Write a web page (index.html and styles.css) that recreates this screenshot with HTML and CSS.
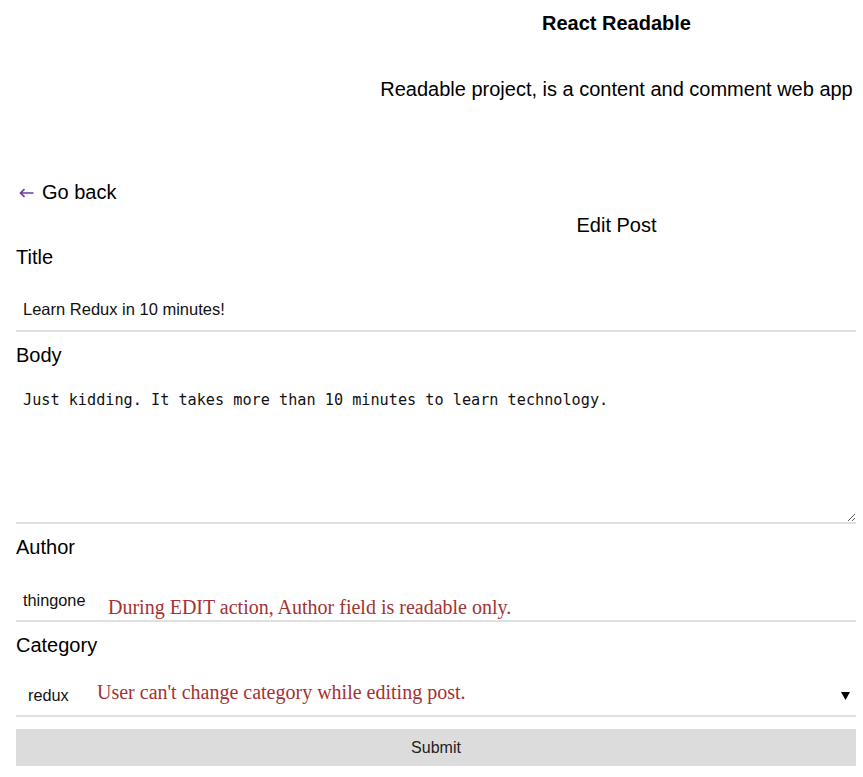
FILE: index.html
```html
<!DOCTYPE html>
<html>
<head>
<meta charset="utf-8">
<title>React Readable</title>
<link rel="stylesheet" href="styles.css">
</head>
<body>
<header class="masthead">
  <div class="masthead-spacer"></div>
  <div class="masthead-text">
    <h1 class="app-title">React Readable</h1>
    <p class="app-desc">Readable project, is a content and comment web app</p>
  </div>
</header>
<main class="page">
  <a class="back-link" href="#"><svg class="back-arrow" width="15" height="10" viewBox="0 0 15 10"><path d="M14.5 5 H1.5 M5.5 1.2 L1.5 5 L5.5 8.8" fill="none" stroke="#6a3c9e" stroke-width="1.6"/></svg><span class="back-text">Go back</span></a>
  <div class="edit-heading-row">
    <div class="heading-spacer"></div>
    <h2 class="edit-heading">Edit Post</h2>
  </div>
  <form class="post-form">
    <div class="field">
      <label class="field-label">Title</label>
      <input class="text-input" type="text" value="Learn Redux in 10 minutes!">
    </div>
    <div class="field">
      <label class="field-label">Body</label>
      <textarea class="text-area">Just kidding. It takes more than 10 minutes to learn technology.</textarea>
    </div>
    <div class="field">
      <label class="field-label">Author</label>
      <div class="readonly-row">
        <input class="text-input author-input" type="text" value="thingone" readonly>
        <span class="note note-author">During EDIT action, Author field is readable only.</span>
      </div>
    </div>
    <div class="field">
      <label class="field-label">Category</label>
      <div class="select-row">
        <span class="select-value">redux</span>
        <span class="note note-category">User can't change category while editing post.</span>
        <svg class="select-caret" width="9" height="8" viewBox="0 0 9 8"><path d="M0 0 H9 L4.5 8 Z" fill="#000"/></svg>
      </div>
    </div>
    <button class="submit-btn" type="button">Submit</button>
  </form>
</main>
</body>
</html>
```
FILE: styles.css
```css
html, body {
  margin: 0;
  padding: 0;
  background: #fff;
}
body {
  font-family: "Liberation Sans", Arial, sans-serif;
  color: #000;
}
.masthead {
  display: grid;
  grid-template-columns: 370px 1fr;
  padding-top: 12px;
}
.masthead-spacer {
  width: 370px;
}
.masthead-text {
  text-align: center;
}
.app-title {
  margin: 0;
  font-size: 20px;
  line-height: 22px;
  font-weight: bold;
}
.app-desc {
  margin: 43px 0 0;
  font-size: 20px;
  line-height: 24px;
}
.page {
  padding: 0 7px 0 16px;
}
.back-link {
  display: flex;
  align-items: center;
  margin-top: 79px;
  height: 24px;
  font-size: 20px;
  line-height: 24px;
  color: #000;
  text-decoration: none;
}
.back-arrow {
  margin-left: 3px;
  margin-top: 1px;
}
.back-text {
  margin-left: 8px;
}
.edit-heading-row {
  display: grid;
  grid-template-columns: 361px 1fr;
  margin-top: 9px;
}
.edit-heading {
  margin: 0;
  font-size: 20px;
  line-height: 24px;
  font-weight: normal;
  text-align: center;
}
.post-form {
  display: flex;
  flex-direction: column;
  margin-top: 8px;
}
.field {
  display: flex;
  flex-direction: column;
  margin-bottom: 11px;
}
.field-label {
  font-size: 20px;
  line-height: 24px;
}
.text-input {
  box-sizing: border-box;
  margin-top: 20px;
  height: 43px;
  padding: 0 7px;
  border: none;
  border-bottom: 2px solid #e0e0e0;
  font-family: "Liberation Sans", Arial, sans-serif;
  font-size: 16.5px;
  color: #111;
  background: #fff;
  outline: none;
}
.text-area {
  box-sizing: border-box;
  margin-top: 13px;
  height: 144px;
  padding: 10px 7px;
  border: none;
  border-bottom: 2px solid #e0e0e0;
  font-family: "DejaVu Sans Mono", "Liberation Mono", monospace;
  font-size: 15.2px;
  line-height: 20px;
  color: #111;
  background: #fff;
  outline: none;
  resize: both;
}
.readonly-row {
  display: flex;
  align-items: flex-end;
  margin-top: 20px;
  height: 43px;
  box-sizing: border-box;
  border-bottom: 2px solid #e0e0e0;
}
.author-input {
  margin: 0;
  width: 92px;
  height: 40px;
  border-bottom: none;
  padding: 0 0 0 7px;
  font-size: 16.3px;
}
.note {
  font-family: "Liberation Serif", "Times New Roman", serif;
  font-size: 20px;
  color: #a33232;
}
.note-author {
  padding-bottom: 1px;
}
.select-row {
  display: flex;
  align-items: center;
  margin-top: 17px;
  height: 43px;
  box-sizing: border-box;
  border-bottom: 2px solid #e0e0e0;
  padding: 0 6px 0 12px;
}
.select-value {
  font-size: 16.3px;
  color: #111;
  width: 69px;
  padding-top: 2px;
}
.note-category {
  flex: 1;
  padding-bottom: 5px;
}
.select-caret {
  margin-top: 3px;
}
.submit-btn {
  margin-top: 1px;
  height: 37px;
  border: none;
  background: #dcdcdc;
  font-family: "Liberation Sans", Arial, sans-serif;
  font-size: 16px;
  color: #222;
  box-shadow: 0 1px 0 #fff, 0 3px 0 #e6e6e6;
}
```
